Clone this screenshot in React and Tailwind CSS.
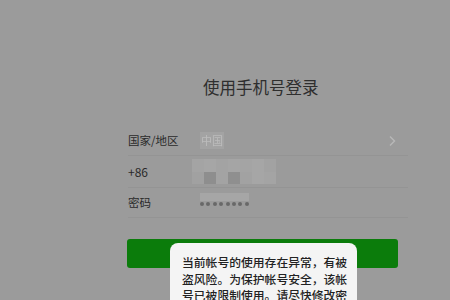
import React from 'react';

const FONT = '"Noto Sans CJK SC", "Noto Sans", sans-serif';

const Chevron = () => (
  <svg width="8" height="12" viewBox="0 0 8 12" className="shrink-0">
    <path d="M2 1.5 L6.5 6 L2 10.5" fill="none" stroke="#b8b8b8" strokeWidth="1.4" />
  </svg>
);

export default function App() {
  return (
    <div
      className="relative w-[450px] h-[300px] overflow-hidden bg-[#9b9b9b]"
      style={{ fontFamily: FONT }}
    >
      {/* Title */}
      <div className="pt-[75px] pl-[203px]">
        <h1 className="text-[16.5px] leading-[24px] text-[#2e2e2e]">使用手机号登录</h1>
      </div>

      {/* Form */}
      <div className="mt-[27px] ml-[128px] w-[280px] flex flex-col">
        {/* Country */}
        <div className="h-[30px] flex items-center border-b border-[#949494]">
          <span className="w-[72px] text-[11.5px] text-[#2a2a2a]">国家/地区</span>
          <span className="px-[1px] bg-[#a3a3a3] text-[11px] text-[#bcbcbc] blur-[0.4px]">中国</span>
          <div className="flex-1" />
          <div className="mr-[12px]">
            <Chevron />
          </div>
        </div>

        {/* Phone */}
        <div className="h-[32px] flex items-center border-b border-[#949494]">
          <span className="w-[64px] text-[12px] text-[#2a2a2a]">+86</span>
          <div className="w-[84px] h-[25px] grid grid-cols-7 grid-rows-2 bg-[#a0a0a0] blur-[0.6px]">
            <div className="bg-[#a4a4a4]" />
            <div className="bg-[#a6a6a6]" />
            <div className="bg-[#a3a3a3]" />
            <div className="bg-[#a5a5a5]" />
            <div className="bg-[#a4a4a4]" />
            <div className="bg-[#a6a6a6]" />
            <div className="bg-[#a2a2a2]" />
            <div className="bg-[#a1a1a1]" />
            <div className="bg-[#8e8e8e]" />
            <div className="bg-[#a3a3a3]" />
            <div className="bg-[#8f8f8f]" />
            <div className="bg-[#a2a2a2]" />
            <div className="bg-[#a6a6a6]" />
            <div className="bg-[#a4a4a4]" />
          </div>
        </div>

        {/* Password */}
        <div className="h-[30px] flex items-center border-b border-[#949494]">
          <span className="w-[72px] text-[11.5px] text-[#2a2a2a]">密码</span>
          <div className="relative flex items-center gap-[2.4px] pt-[3px]">
            <div className="absolute left-0 right-0 top-[-6px] h-[8px] bg-[#a6a6a6] blur-[0.5px]" />
            {[0, 1, 2, 3, 4, 5, 6, 7].map((i) => (
              <span key={i} className="w-[4px] h-[4px] rounded-full bg-[#686868]" />
            ))}
          </div>
        </div>
      </div>

      {/* Login button */}
      <div className="mt-[21px] ml-[127px] w-[271px] h-[29px] rounded-[3px] bg-[#0b7c0b]" />

      {/* Alert popup */}
      <div className="absolute left-[170px] top-[243px] w-[187px] h-[80px] rounded-[8px] bg-[#f4f4f4] pt-[11px] pl-[12px]">
        <p className="w-[168px] text-[11.8px] leading-[16.5px] font-medium text-[#222]">
          当前帐号的使用存在异常，有被盗风险。为保护帐号安全，该帐号已被限制使用。请尽快修改密码
        </p>
      </div>
    </div>
  );
}
